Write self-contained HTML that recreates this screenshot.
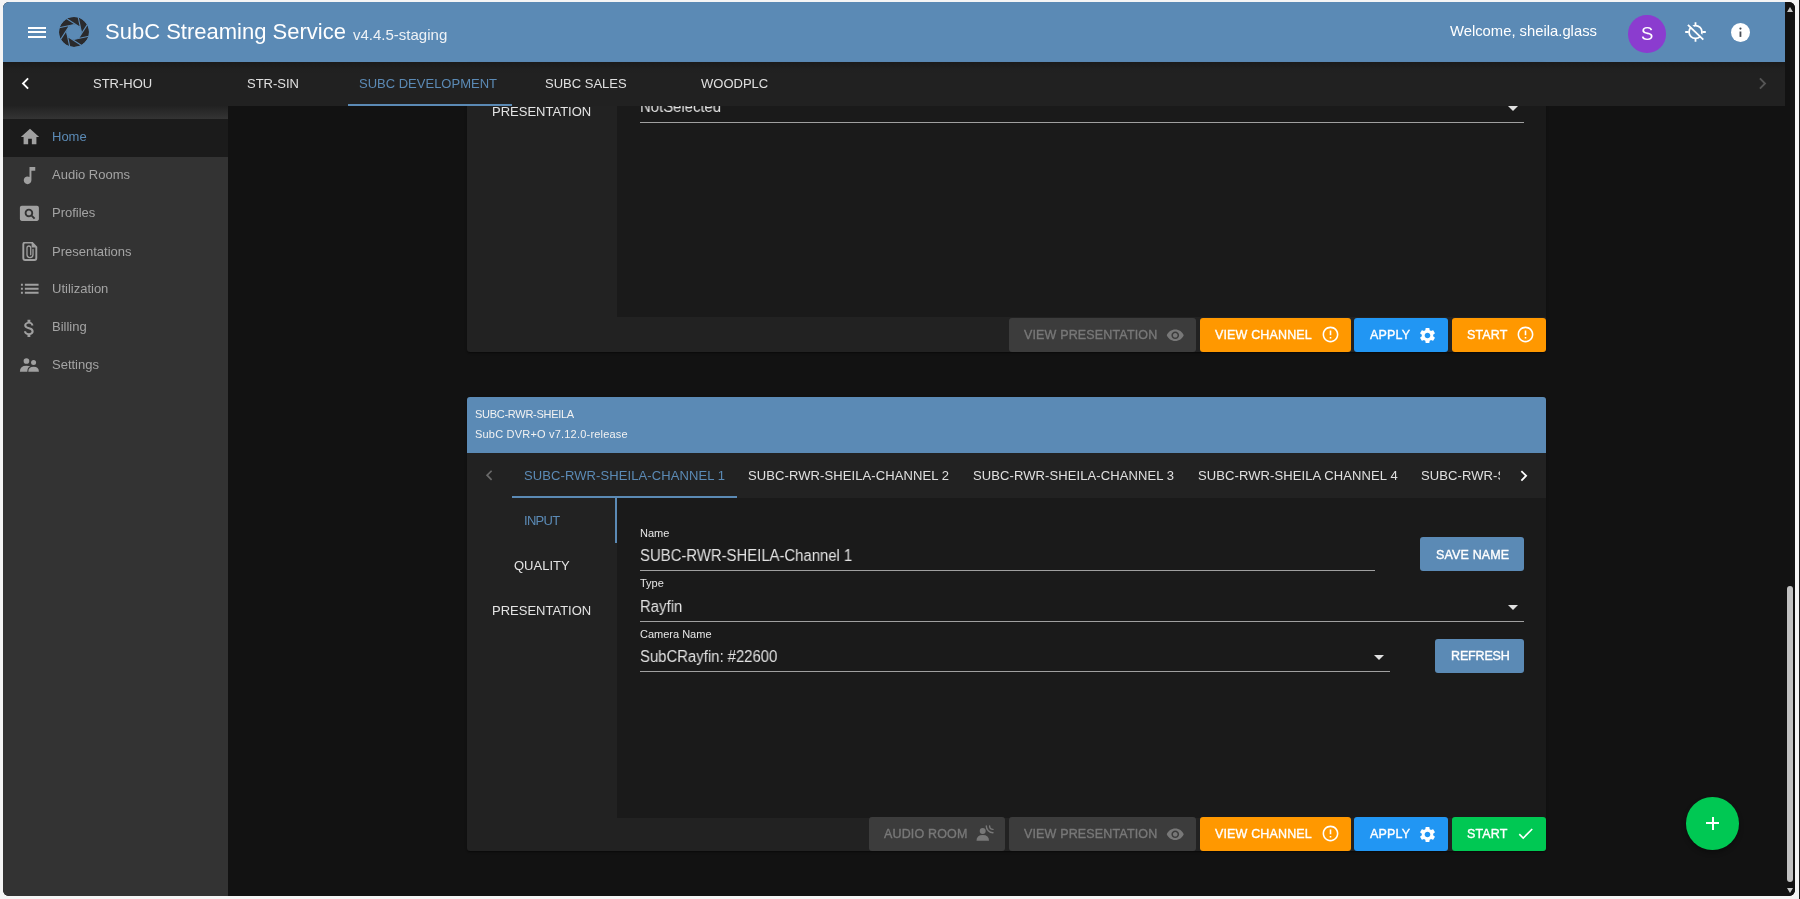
<!DOCTYPE html>
<html><head><meta charset="utf-8">
<style>
*{box-sizing:border-box;margin:0;padding:0}
html,body{width:1800px;height:899px;overflow:hidden;background:#f5f5f5;font-family:"Liberation Sans",sans-serif}
.a{position:absolute}
.t{position:absolute;white-space:nowrap;line-height:1;will-change:transform}
#rline{position:absolute;left:1799px;top:0;width:1px;height:899px;background:#1a1a1a}
#win{position:absolute;left:0;top:0;width:1800px;height:899px;clip-path:inset(2px 5px 3px 3px round 6px);background:#121212}
.tab{color:#e0e0e0;font-size:13px;top:76.6px}
.nav{color:#a4a4a4;font-size:13px;left:52px}
.ico{position:absolute;fill:#a0a0a0}
.btn{position:absolute;height:34px;border-radius:3px}
.btn .t{font-size:12.5px;letter-spacing:0.15px;color:#fff;-webkit-text-stroke:0.35px currentColor}
.btn svg{position:absolute;fill:#fff}
.dis{background:#3c3c3c}
.dis .t{color:#787878}
.dis svg{fill:#787878}
.org{background:#ff9800}
.blu{background:#2196f3}
.grn{background:#00c853}
.ul{position:absolute;height:1px;background:#a0a0a0}
.lbl{font-size:11px;color:#e6e6e6}
.val{font-size:16px;color:#e2e2e2;transform:scaleX(0.93);transform-origin:0 0}
.arr{position:absolute;width:0;height:0;border-left:5px solid transparent;border-right:5px solid transparent;border-top:5px solid #e0e0e0}
.sbtn{position:absolute;background:#5b8ab5;border-radius:3px;height:34px}
.sbtn .t{font-size:12.5px;letter-spacing:0.15px;color:#fff;-webkit-text-stroke:0.35px currentColor}
.ctab{font-size:13px;color:#e0e0e0;top:468.6px;letter-spacing:0.1px}
.vt{font-size:13px;color:#e4e4e4}
</style></head><body>
<div id="rline"></div>
<div id="win">
  <!-- header -->
  <div class="a" style="left:0;top:0;width:1785px;height:62px;background:#5b8ab5"></div>
  <div class="a" style="left:28px;top:26.7px;width:17.5px;height:2px;background:#fff"></div>
  <div class="a" style="left:28px;top:31.3px;width:17.5px;height:2px;background:#fff"></div>
  <div class="a" style="left:28px;top:36px;width:17.5px;height:2px;background:#fff"></div>
  <svg class="a" style="left:59.2px;top:17px" width="30" height="30" viewBox="0 0 30 30">
    <defs><clipPath id="lc"><circle cx="15" cy="15" r="15"/></clipPath></defs>
    <g clip-path="url(#lc)">
      <circle cx="15" cy="15" r="15" fill="#2a2a2c"/>
      <path d="M22.46 15.46L19.19 0.08M19.95 20.60L28.51 7.41M14.54 22.46L29.92 19.19M9.40 19.95L22.59 28.51M7.54 14.54L10.81 29.92M10.05 9.40L1.49 22.59M15.46 7.54L0.08 10.81M20.60 10.05L7.41 1.49" stroke="#5b8ab5" stroke-width="1.1" fill="none"/>
      <circle cx="15" cy="15" r="7.6" fill="#5b8ab5"/>
    </g>
  </svg>
  <div class="t" style="left:105px;top:21px;font-size:22px;color:#fff">SubC Streaming Service</div>
  <div class="t" style="left:353px;top:26.7px;font-size:15px;color:#eef2f6">v4.4.5-staging</div>
  <div class="t" style="left:1449.5px;top:23.8px;font-size:14.8px;color:#fff">Welcome, sheila.glass</div>
  <div class="a" style="left:1628px;top:15px;width:37.5px;height:37.5px;border-radius:50%;background:#8b3ccf"></div>
  <div class="t" style="left:1640.5px;top:24.8px;font-size:18.5px;color:#fff">S</div>
  <svg class="a" style="left:1684px;top:21px" width="23" height="22" viewBox="0 0 23 22">
    <g stroke="#fff" stroke-width="1.8" fill="none">
      <circle cx="11.5" cy="11" r="6.45"/>
      <path d="M11.5 1.2v3.4M11.5 17.4v3.4M1.2 11h3.4M18.4 11h3.4"/>
    </g>
    <path d="M5.0 2.65L20.4 17.45" stroke="#5b8ab5" stroke-width="2.4"/>
    <path d="M3.9 3.8L19.3 18.6" stroke="#fff" stroke-width="1.8"/>
  </svg>
  <svg class="a" style="left:1730.9px;top:22.9px" width="19" height="19" viewBox="0 0 19 19">
    <circle cx="9.5" cy="9.5" r="9.5" fill="#fff"/>
    <rect x="8.55" y="8.5" width="1.8" height="5.4" fill="#474d55"/>
    <circle cx="9.45" cy="5.6" r="1.1" fill="#474d55"/>
  </svg>

  <!-- tab bar -->
  <div class="a" style="left:0;top:62px;width:1785px;height:44px;background:linear-gradient(#1a1a1a 0px,#202020 7px,#212121 12px);z-index:3">
  </div>
  <div style="position:absolute;left:0;top:0;z-index:4">
    <svg class="a" style="left:14.1px;top:72.2px;fill:#fff" width="23" height="23" viewBox="0 0 24 24"><path d="M15.41 7.41L14 6l-6 6 6 6 1.41-1.41L10.83 12z"/></svg>
    <div class="t tab" style="left:93px">STR-HOU</div>
    <div class="t tab" style="left:247px">STR-SIN</div>
    <div class="t tab" style="left:359px;color:#5b8ab5">SUBC DEVELOPMENT</div>
    <div class="t tab" style="left:545px">SUBC SALES</div>
    <div class="t tab" style="left:701px">WOODPLC</div>
    <div class="a" style="left:348px;top:104px;width:164px;height:2px;background:#5b8ab5"></div>
    <svg class="a" style="left:1751.1px;top:72.2px;fill:#555" width="23" height="23" viewBox="0 0 24 24"><path d="M10 6L8.59 7.41 13.17 12l-4.58 4.59L10 18l6-6z"/></svg>
  </div>

  <!-- sidebar -->
  <div class="a" style="left:0;top:106px;width:228px;height:793px;background:#333"></div>
  <div class="a" style="left:0;top:106px;width:228px;height:12.5px;background:linear-gradient(#222,#343434)"></div>
  <div class="a" style="left:0;top:118.5px;width:228px;height:38.5px;background:#1b1b1b"></div>
  <svg class="ico" style="left:19px;top:126px" width="22" height="22" viewBox="0 0 24 24"><path d="M10 20v-6h4v6h5v-8h3L12 3 2 12h3v8z"/></svg>
  <svg class="ico" style="left:17.9px;top:164px" width="23" height="23" viewBox="0 0 24 24"><path d="M12 3v10.55c-.59-.34-1.27-.55-2-.55-2.21 0-4 1.79-4 4s1.79 4 4 4 4-1.79 4-4V7h4V3h-6z"/></svg>
  <svg class="ico" style="left:18.1px;top:201.9px" width="22.8" height="22.8" viewBox="0 0 24 24"><path d="M11.5 9C10.12 9 9 10.12 9 11.5s1.12 2.5 2.5 2.5 2.5-1.12 2.5-2.5S12.88 9 11.5 9zM20 4H4c-1.1 0-2 .9-2 2v12c0 1.1.9 2 2 2h16c1.1 0 2-.9 2-2V6c0-1.1-.9-2-2-2zm-3.21 14.21l-2.91-2.91c-.69.44-1.51.71-2.38.71C9.01 16 7 13.99 7 11.5S9.01 7 11.5 7 16 9.01 16 11.5c0 .88-.26 1.69-.7 2.39l2.91 2.9-1.42 1.42z"/></svg>
  <svg class="a" style="left:21.7px;top:241.9px" width="16" height="19.4" viewBox="0 0 16 18.8" preserveAspectRatio="none">
    <path d="M1.3 2.4Q1.3 0.6 3.1 0.6H10L14.3 4.9V15.6Q14.3 17.4 12.5 17.4H3.1Q1.3 17.4 1.3 15.6Z" fill="none" stroke="#a0a0a0" stroke-width="1.9"/>
    <path d="M9.6 0.8L14.1 5.3H9.6Z" fill="#a0a0a0"/>
    <path d="M11 7.2V12.2A3 3 0 0 1 5 12.2V5.7A1.85 1.85 0 0 1 8.7 5.7V12.3" fill="none" stroke="#a0a0a0" stroke-width="1.3" stroke-linecap="round"/>
  </svg>
  <svg class="ico" style="left:17.9px;top:277.2px" width="23.5" height="23.5" viewBox="0 0 24 24"><path d="M3 13h2v-2H3v2zm0 4h2v-2H3v2zm0-8h2V7H3v2zm4 4h14v-2H7v2zm0 4h14v-2H7v2zM7 7v2h14V7H7z"/></svg>
  <svg class="ico" style="left:17.7px;top:316.5px" width="22.8" height="22.8" viewBox="0 0 24 24"><path d="M11.8 10.9c-2.27-.59-3-1.2-3-2.15 0-1.09 1.01-1.85 2.7-1.85 1.78 0 2.44.85 2.5 2.1h2.21c-.07-1.72-1.12-3.3-3.21-3.81V3h-3v2.16c-1.94.42-3.5 1.68-3.5 3.61 0 2.31 1.91 3.46 4.7 4.13 2.5.6 3 1.48 3 2.41 0 .69-.49 1.79-2.7 1.79-2.06 0-2.87-.92-2.98-2.1h-2.2c.12 2.19 1.76 3.42 3.68 3.83V21h3v-2.15c1.95-.37 3.5-1.5 3.5-3.55 0-2.84-2.43-3.81-4.7-4.4z"/></svg>
  <svg class="ico" style="left:18px;top:355px" width="22" height="18" viewBox="0 0 22 18"><circle cx="8.45" cy="6" r="2.85"/><circle cx="15.57" cy="7.45" r="2.5"/><path d="M10.3 16.7Q10.3 11.7 15.6 11.7Q20.9 11.7 20.9 16.7Z"/><path d="M1.9 16.7Q1.9 10.8 8.5 10.8Q11 10.8 12.4 11.2Q9.3 12.1 9.3 16.7Z"/></svg>
  <div class="t nav" style="top:130.1px;color:#5b8ab5">Home</div>
  <div class="t nav" style="top:168.1px">Audio Rooms</div>
  <div class="t nav" style="top:206.1px">Profiles</div>
  <div class="t nav" style="top:244.7px">Presentations</div>
  <div class="t nav" style="top:282.1px">Utilization</div>
  <div class="t nav" style="top:320.4px">Billing</div>
  <div class="t nav" style="top:358.2px">Settings</div>

  <!-- CARDS -->
  <div class="a" style="left:467px;top:62px;width:1079px;height:290px;background:#222;border-radius:3px;box-shadow:0 2px 1px -1px rgba(0,0,0,.2),0 1px 1px 0 rgba(0,0,0,.14),0 1px 3px 0 rgba(0,0,0,.12)"></div>
  <div class="a" style="left:617px;top:62px;width:929px;height:255px;background:#1a1a1a"></div>
  <div class="t vt" style="left:491.5px;top:104.6px">PRESENTATION</div>
  <div class="t val" style="left:639.6px;top:99.4px">NotSelected</div>
  <div class="ul" style="left:639.6px;top:122.2px;width:884.4px"></div>
  <div class="arr" style="left:1508px;top:105.6px"></div>
  <div class="btn dis" style="left:1008.6px;top:318px;width:187.4px">
    <div class="t" style="left:15px;top:11.3px">VIEW PRESENTATION</div>
    <svg style="left:157.6px;top:7.75px" width="18.5" height="18.5" viewBox="0 0 24 24"><path d="M12 4.5C7 4.5 2.73 7.61 1 12c1.73 4.39 6 7.5 11 7.5s9.27-3.11 11-7.5c-1.73-4.39-6-7.5-11-7.5zM12 17c-2.76 0-5-2.24-5-5s2.24-5 5-5 5 2.24 5 5-2.24 5-5 5zm0-8c-1.66 0-3 1.34-3 3s1.34 3 3 3 3-1.34 3-3-1.34-3-3-3z"/></svg>
  </div>
  <div class="btn org" style="left:1200px;top:318px;width:150.6px">
    <div class="t" style="left:15.1px;top:11.3px">VIEW CHANNEL</div>
    <svg style="left:120.6px;top:7.2px" width="19" height="19" viewBox="0 0 24 24"><path d="M11 15h2v2h-2zm0-8h2v6h-2zm.99-5C6.47 2 2 6.48 2 12s4.47 10 9.99 10C17.52 22 22 17.52 22 12S17.52 2 11.99 2zM12 20c-4.42 0-8-3.58-8-8s3.58-8 8-8 8 3.58 8 8-3.58 8-8 8z"/></svg>
  </div>
  <div class="btn blu" style="left:1354.3px;top:318px;width:93.7px">
    <div class="t" style="left:15.3px;top:11.3px">APPLY</div>
    <svg style="left:63.7px;top:7.7px" width="19" height="19" viewBox="0 0 24 24"><path d="M19.14 12.94c.04-.3.06-.61.06-.94 0-.32-.02-.64-.07-.94l2.03-1.58c.18-.14.23-.41.12-.61l-1.92-3.32c-.12-.22-.37-.29-.59-.22l-2.39.96c-.5-.38-1.03-.7-1.62-.94L14.4 2.81c-.04-.24-.24-.41-.48-.41h-3.84c-.24 0-.43.17-.47.41L9.25 5.35c-.59.24-1.13.57-1.62.94L5.24 5.33c-.22-.08-.47 0-.59.22L2.74 8.87c-.12.21-.08.47.12.61l2.03 1.58c-.05.3-.09.63-.09.94s.02.64.07.94l-2.03 1.58c-.18.14-.23.41-.12.61l1.92 3.32c.12.22.37.29.59.22l2.39-.96c.5.38 1.03.7 1.62.94l.36 2.54c.05.24.24.41.48.41h3.84c.24 0 .44-.17.47-.41l.36-2.54c.59-.24 1.13-.56 1.62-.94l2.39.96c.22.08.47 0 .59-.22l1.92-3.32c.12-.22.07-.47-.12-.61l-2.01-1.58zM12 15.6c-1.98 0-3.6-1.62-3.6-3.6s1.62-3.6 3.6-3.6 3.6 1.62 3.6 3.6-1.62 3.6-3.6 3.6z"/></svg>
  </div>
  <div class="btn org" style="left:1452px;top:318px;width:94px">
    <div class="t" style="left:15.2px;top:11.3px">START</div>
    <svg style="left:64.3px;top:7.2px" width="19" height="19" viewBox="0 0 24 24"><path d="M11 15h2v2h-2zm0-8h2v6h-2zm.99-5C6.47 2 2 6.48 2 12s4.47 10 9.99 10C17.52 22 22 17.52 22 12S17.52 2 11.99 2zM12 20c-4.42 0-8-3.58-8-8s3.58-8 8-8 8 3.58 8 8-3.58 8-8 8z"/></svg>
  </div>
  <div class="a" style="left:467px;top:397px;width:1079px;height:454px;background:#222;border-radius:3px;overflow:hidden;box-shadow:0 2px 1px -1px rgba(0,0,0,.2),0 1px 1px 0 rgba(0,0,0,.14),0 1px 3px 0 rgba(0,0,0,.12)">
    <div class="a" style="left:0;top:0;width:1079px;height:56px;background:#5b8ab5"></div>
    <div class="a" style="left:150px;top:101px;width:929px;height:319.5px;background:#1a1a1a"></div>
  </div>
  <div class="t" style="left:474.6px;top:408.6px;font-size:11px;letter-spacing:-0.28px;color:#f2f2f2">SUBC-RWR-SHEILA</div>
  <div class="t" style="left:474.6px;top:428.7px;font-size:11px;letter-spacing:0.2px;color:#f2f2f2">SubC DVR+O v7.12.0-release</div>
  <svg class="a" style="left:478.9px;top:465.2px;fill:#6a6a6a" width="20.6" height="20.6" viewBox="0 0 24 24"><path d="M15.41 7.41L14 6l-6 6 6 6 1.41-1.41L10.83 12z"/></svg>
  <div class="t ctab" style="left:523.7px;color:#5b8ab5">SUBC-RWR-SHEILA-CHANNEL 1</div>
  <div class="t ctab" style="left:748.1px">SUBC-RWR-SHEILA-CHANNEL 2</div>
  <div class="t ctab" style="left:973.2px">SUBC-RWR-SHEILA-CHANNEL 3</div>
  <div class="t ctab" style="left:1198.3px">SUBC-RWR-SHEILA CHANNEL 4</div>
  <div class="a" style="left:1421px;top:460px;width:78.5px;height:30px;overflow:hidden"><div class="t ctab" style="left:0;top:8.6px">SUBC-RWR-SHEILA-CHANNEL 5</div></div>
  <svg class="a" style="left:1512.9px;top:464.6px;fill:#fff" width="21.6" height="21.6" viewBox="0 0 24 24"><path d="M10 6L8.59 7.41 13.17 12l-4.58 4.59L10 18l6-6z"/></svg>
  <div class="a" style="left:512px;top:496px;width:225px;height:2px;background:#5b8ab5"></div>
  <div class="a" style="left:615px;top:498px;width:2px;height:45px;background:#5b8ab5"></div>
  <div class="t vt" style="left:523.7px;top:513.6px;letter-spacing:-0.7px;color:#5b8ab5">INPUT</div>
  <div class="t vt" style="left:514.2px;top:558.6px">QUALITY</div>
  <div class="t vt" style="left:491.5px;top:603.6px">PRESENTATION</div>

  <div class="t lbl" style="left:639.7px;top:528.4px">Name</div>
  <div class="t val" style="left:639.6px;top:547.6px">SUBC-RWR-SHEILA-Channel 1</div>
  <div class="ul" style="left:639.6px;top:570px;width:735.4px"></div>
  <div class="sbtn" style="left:1420px;top:537.4px;width:104px"><div class="t" style="left:15.5px;top:11.6px">SAVE NAME</div></div>

  <div class="t lbl" style="left:639.7px;top:578.2px">Type</div>
  <div class="t val" style="left:639.6px;top:599.2px">Rayfin</div>
  <div class="ul" style="left:639.6px;top:621px;width:884.4px"></div>
  <div class="arr" style="left:1508px;top:604.6px"></div>

  <div class="t lbl" style="left:639.7px;top:628.9px">Camera Name</div>
  <div class="t val" style="left:639.6px;top:648.9px">SubCRayfin: #22600</div>
  <div class="ul" style="left:639.6px;top:671px;width:750.4px"></div>
  <div class="arr" style="left:1374px;top:654.7px"></div>
  <div class="sbtn" style="left:1435.2px;top:638.8px;width:88.8px"><div class="t" style="left:15.5px;top:10.8px;letter-spacing:-0.15px">REFRESH</div></div>

  <div class="btn dis" style="left:869px;top:817px;width:136px">
    <div class="t" style="left:15.3px;top:11.3px">AUDIO ROOM</div>
    <svg style="left:101px;top:1px" width="30" height="30" viewBox="0 0 30 30"><circle cx="12.7" cy="13" r="3"/><path d="M6.5 22.7Q6.5 16.9 12.75 16.9Q19 16.9 19 22.7Z"/><path d="M19.6 8A3.4 3.4 0 0 0 23 11.4M16.3 8A6.7 6.7 0 0 0 23 14.7" fill="none" stroke="#787878" stroke-width="1.4" stroke-linecap="round"/></svg>
  </div>
  <div class="btn dis" style="left:1008.6px;top:817px;width:187.4px">
    <div class="t" style="left:15px;top:11.3px">VIEW PRESENTATION</div>
    <svg style="left:157.6px;top:7.75px" width="18.5" height="18.5" viewBox="0 0 24 24"><path d="M12 4.5C7 4.5 2.73 7.61 1 12c1.73 4.39 6 7.5 11 7.5s9.27-3.11 11-7.5c-1.73-4.39-6-7.5-11-7.5zM12 17c-2.76 0-5-2.24-5-5s2.24-5 5-5 5 2.24 5 5-2.24 5-5 5zm0-8c-1.66 0-3 1.34-3 3s1.34 3 3 3 3-1.34 3-3-1.34-3-3-3z"/></svg>
  </div>
  <div class="btn org" style="left:1200px;top:817px;width:150.6px">
    <div class="t" style="left:15.1px;top:11.3px">VIEW CHANNEL</div>
    <svg style="left:120.6px;top:7.2px" width="19" height="19" viewBox="0 0 24 24"><path d="M11 15h2v2h-2zm0-8h2v6h-2zm.99-5C6.47 2 2 6.48 2 12s4.47 10 9.99 10C17.52 22 22 17.52 22 12S17.52 2 11.99 2zM12 20c-4.42 0-8-3.58-8-8s3.58-8 8-8 8 3.58 8 8-3.58 8-8 8z"/></svg>
  </div>
  <div class="btn blu" style="left:1354.3px;top:817px;width:93.7px">
    <div class="t" style="left:15.3px;top:11.3px">APPLY</div>
    <svg style="left:63.7px;top:7.7px" width="19" height="19" viewBox="0 0 24 24"><path d="M19.14 12.94c.04-.3.06-.61.06-.94 0-.32-.02-.64-.07-.94l2.03-1.58c.18-.14.23-.41.12-.61l-1.92-3.32c-.12-.22-.37-.29-.59-.22l-2.39.96c-.5-.38-1.03-.7-1.62-.94L14.4 2.81c-.04-.24-.24-.41-.48-.41h-3.84c-.24 0-.43.17-.47.41L9.25 5.35c-.59.24-1.13.57-1.62.94L5.24 5.33c-.22-.08-.47 0-.59.22L2.74 8.87c-.12.21-.08.47.12.61l2.03 1.58c-.05.3-.09.63-.09.94s.02.64.07.94l-2.03 1.58c-.18.14-.23.41-.12.61l1.92 3.32c.12.22.37.29.59.22l2.39-.96c.5.38 1.03.7 1.62.94l.36 2.54c.05.24.24.41.48.41h3.84c.24 0 .44-.17.47-.41l.36-2.54c.59-.24 1.13-.56 1.62-.94l2.39.96c.22.08.47 0 .59-.22l1.92-3.32c.12-.22.07-.47-.12-.61l-2.01-1.58zM12 15.6c-1.98 0-3.6-1.62-3.6-3.6s1.62-3.6 3.6-3.6 3.6 1.62 3.6 3.6-1.62 3.6-3.6 3.6z"/></svg>
  </div>
  <div class="btn grn" style="left:1452px;top:817px;width:94px">
    <div class="t" style="left:15.2px;top:11.3px">START</div>
    <svg style="left:63.8px;top:7.2px" width="19.2" height="19.2" viewBox="0 0 24 24"><path d="M9 16.17L4.83 12l-1.42 1.41L9 19 21 7l-1.41-1.41z"/></svg>
  </div>

  <!-- FAB -->
  <div class="a" style="left:1686px;top:797px;width:52.5px;height:52.5px;border-radius:50%;background:#00c853;box-shadow:0 3px 5px rgba(0,0,0,.3)"></div>
  <div class="a" style="left:1706px;top:822px;width:13px;height:2px;background:#fff"></div>
  <div class="a" style="left:1711.5px;top:816.5px;width:2px;height:13px;background:#fff"></div>

  <!-- scrollbar -->
  <div class="a" style="left:1785px;top:0;width:15px;height:899px;background:#121212;z-index:6"></div>
  <div class="a" style="left:1787px;top:585.7px;width:6px;height:296.3px;border-radius:3px;background:#c1c1c1;z-index:7"></div>
  <div class="a" style="left:1786.7px;top:7.3px;width:0;height:0;border-left:3.2px solid transparent;border-right:3.2px solid transparent;border-bottom:5px solid #c8c8c8;z-index:7"></div>
  <div class="a" style="left:1786.7px;top:887.5px;width:0;height:0;border-left:3.2px solid transparent;border-right:3.2px solid transparent;border-top:5px solid #c8c8c8;z-index:7"></div>
</div>
</body></html>
